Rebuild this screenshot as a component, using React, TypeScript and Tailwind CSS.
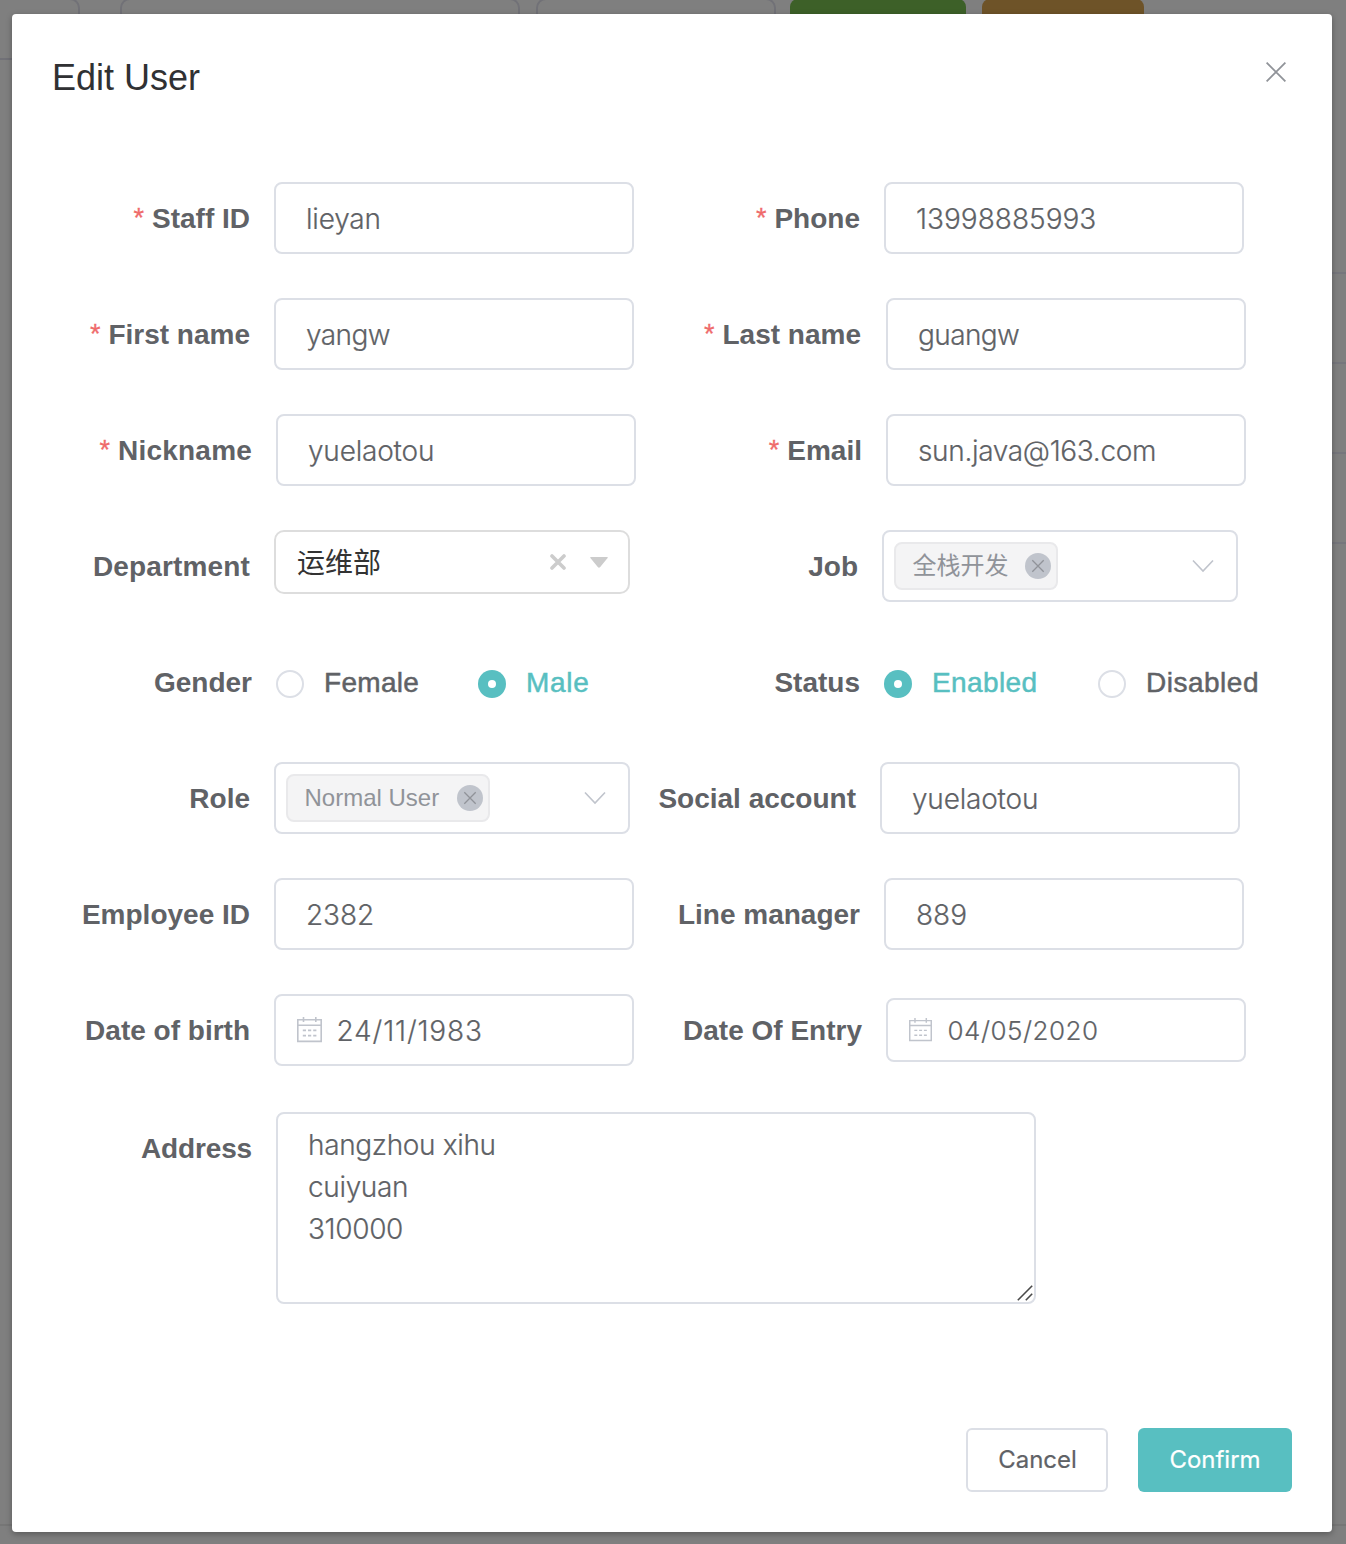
import React from "react";

const inputText =
  "font-['Inter','Noto_Sans_CJK_SC',sans-serif] font-light text-[28px] text-[#606266] [-webkit-text-stroke:0.2px_#606266] outline-none";

function Backdrop() {
  return (
    <div className="flex h-full flex-col bg-[#7f7f7f]">
      <div className="-mt-0.5 flex h-[60px] shrink-0">
        <div className="w-20 shrink-0 rounded-tr-[10px] border-2 border-b-0 border-l-0 border-[#717177]" />
        <div className="ml-10 w-[400px] shrink-0 rounded-[10px] border-2 border-[#717177]" />
        <div className="ml-4 w-60 shrink-0 rounded-[10px] border-2 border-[#717177]" />
        <div className="mt-px ml-3.5 w-44 shrink-0 rounded-[8px] bg-[#3d6028]" />
        <div className="mt-px ml-4 w-[162px] shrink-0 rounded-[8px] bg-[#6e5328]" />
      </div>
      <div className="h-0.5 w-3 shrink-0 bg-[#717177]" />
      <div className="ml-auto flex w-3.5 shrink-0 flex-col gap-[88px] pt-[212px]">
        <div className="h-0.5 bg-[#76767c]" />
        <div className="h-0.5 bg-[#76767c]" />
        <div className="h-0.5 bg-[#76767c]" />
        <div className="h-0.5 bg-[#76767c]" />
      </div>
      <div className="mt-[980px] h-0.5 shrink-0 bg-[#767676]" />
    </div>
  );
}

function Label({ text, width, required, tracking = "tracking-normal" }: { text: string; width: string; required?: boolean; tracking?: string }) {
  return (
    <div className={`${width} mr-6 flex shrink-0 justify-end pt-0.5 whitespace-nowrap text-[28px] font-bold text-[#606266] ${tracking}`}>
      {required && (
        <span className="mr-2 text-[27px] font-normal text-[#ef6b6b] [-webkit-text-stroke:0.3px_#ef6b6b]">*</span>
      )}
      {text}
    </div>
  );
}

function TextInput({ value, tracking = "tracking-normal" }: { value: string; tracking?: string }) {
  return (
    <input
      className={`h-[72px] w-[360px] rounded-lg border-2 border-[#dcdfe6] bg-white px-[30px] pt-0.5 ${inputText} ${tracking}`}
      defaultValue={value}
    />
  );
}

function CalendarIcon({ className }: { className: string }) {
  return (
    <svg className={className} viewBox="0 0 25 26" fill="none" stroke="#c0c4cc" strokeWidth="1.6">
      <path d="M0.8 2.8H24.2V24.4H0.8ZM0.8 8.2H24.2M6.5 0V5M18.8 0V5" />
      <path d="M5.8 13.4H9M11 13.4H14.2M16.2 13.4H19.4M5.8 18.6H9M11 18.6H14.2M16.2 18.6H19.4" />
    </svg>
  );
}

function DateInput({ value, small }: { value: string; small?: boolean }) {
  return (
    <div
      className={`flex w-[360px] items-center rounded-lg border-2 border-[#dcdfe6] bg-white pl-[21px] ${small ? "h-16" : "h-[72px]"}`}
    >
      <CalendarIcon className={small ? "h-6 w-[23px] shrink-0" : "h-[26px] w-[25px] shrink-0"} />
      <input
        className={`w-60 bg-transparent ${inputText} ${small ? "ml-[15.5px] !text-[26px] tracking-[0.5px]" : "ml-[14.5px] pt-0.5 tracking-[0.85px]"}`}
        defaultValue={value}
      />
    </div>
  );
}

function TagSelect({ tag, tagWidth }: { tag: string; tagWidth: string }) {
  return (
    <div className="flex h-[72px] w-[356px] items-center rounded-lg border-2 border-[#dcdfe6] bg-white pr-[22px] pl-2.5">
      <div
        className={`${tagWidth} flex h-12 items-center justify-between rounded-lg border-2 border-[#e9e9eb] bg-[#f4f4f5] pr-[5px] pl-[16.5px] text-[24px] whitespace-nowrap text-[#909399]`}
      >
        {tag}
        <svg className="h-[26px] w-[26px]" viewBox="0 0 26 26" fill="none">
          <circle cx="13" cy="13" r="13" fill="#c0c4cc" />
          <path d="M7.3 7.3L18.7 18.7M18.7 7.3L7.3 18.7" stroke="#909399" strokeWidth="1.3" />
        </svg>
      </div>
      <svg className="ml-auto h-3.5 w-[22px]" viewBox="0 0 22 14" fill="none" stroke="#c0c4cc" strokeWidth="1.6">
        <path d="M1 1.5L11 12L21 1.5" />
      </svg>
    </div>
  );
}

function TreeSelect() {
  return (
    <div className="mb-2 flex h-16 w-[356px] items-center rounded-[10px] border-2 border-[#ddd] bg-white pr-5 pl-[21px] text-[28px] text-[#333]">
      <span className="pt-[3px]">运维部</span>
      <svg className="ml-auto h-4 w-4" viewBox="0 0 16 16" stroke="#ccc" strokeWidth="3.6" strokeLinecap="round">
        <path d="M2 2L14 14M14 2L2 14" />
      </svg>
      <svg className="ml-6 h-[11px] w-[18px]" viewBox="0 0 18 11" fill="#ccc">
        <path d="M1 0H17Q18.6 0 17.4 1.3L10.2 10Q9 11.4 7.8 10L0.6 1.3Q-0.6 0 1 0Z" />
      </svg>
    </div>
  );
}

function Radio({ text, checked, className, tracking }: { text: string; checked?: boolean; className: string; tracking: string }) {
  return (
    <label className={`${className} flex items-center`}>
      {checked ? (
        <span className="mt-1 flex h-7 w-7 items-center justify-center rounded-full bg-[#58bfc1]">
          <span className="h-2 w-2 rounded-full bg-white" />
        </span>
      ) : (
        <span className="mt-1 h-7 w-7 rounded-full border-2 border-[#dcdfe6] bg-white" />
      )}
      <span
        className={`ml-5 pt-0.5 text-[28px] ${tracking} ${checked ? "text-[#58bfc1] [-webkit-text-stroke:0.5px_#58bfc1]" : "text-[#606266] [-webkit-text-stroke:0.5px_#606266]"}`}
      >
        {text}
      </span>
    </label>
  );
}

function Row({ left, right }: { left: React.ReactNode; right: React.ReactNode }) {
  return (
    <div className="flex h-[72px]">
      <div className="flex w-[624px] shrink-0 items-center">{left}</div>
      <div className="flex items-center">{right}</div>
    </div>
  );
}

export default function App() {
  return (
    <div className="relative h-[1544px] w-[1346px] overflow-hidden font-['Liberation_Sans','Noto_Sans_CJK_SC',sans-serif]">
      <Backdrop />
      <div className="absolute top-[14px] left-3 flex h-[1518px] w-[1320px] flex-col rounded bg-white shadow-[0_2px_6px_rgba(0,0,0,0.3)]">
        <header className="flex h-[168px] shrink-0 items-start justify-between pt-11 pr-[46px] pl-10">
          <h1 className="text-[36px] leading-10 text-[#303133]">Edit User</h1>
          <svg className="mt-1 h-5 w-5" viewBox="0 0 20 20" stroke="#909399" strokeWidth="1.8">
            <path d="M0.6 0.6L19.4 19.4M19.4 0.6L0.6 19.4" />
          </svg>
        </header>

        <div className="flex flex-col gap-11">
          <Row
            left={<><Label text="Staff ID" width="w-[238px]" required /><TextInput value="lieyan" tracking="tracking-[-0.2px]" /></>}
            right={<><Label text="Phone" width="w-56" required /><TextInput value="13998885993" /></>}
          />
          <Row
            left={<><Label text="First name" width="w-[238px]" required /><TextInput value="yangw" tracking="tracking-[-0.6px]" /></>}
            right={<><Label text="Last name" width="w-[225px]" required /><div className="w-px" /><TextInput value="guangw" tracking="tracking-[-0.6px]" /></>}
          />
          <Row
            left={<><Label text="Nickname" width="w-60" tracking="tracking-[0.2px]" required /><TextInput value="yuelaotou" tracking="tracking-[-0.2px]" /></>}
            right={<><Label text="Email" width="w-[226px]" required /><TextInput value="sun.java@163.com" tracking="tracking-[-0.34px]" /></>}
          />
          <Row
            left={<><Label text="Department" width="w-[238px]" tracking="tracking-[0.15px]" /><TreeSelect /></>}
            right={<><Label text="Job" width="w-[222px]" /><TagSelect tag="全栈开发" tagWidth="w-[164px]" /></>}
          />
          <Row
            left={
              <>
                <Label text="Gender" width="w-60" />
                <Radio text="Female" className="w-[202px]" tracking="tracking-[0.3px]" />
                <Radio text="Male" className="" tracking="tracking-[0.7px]" checked />
              </>
            }
            right={
              <>
                <Label text="Status" width="w-56" />
                <Radio text="Enabled" className="w-[214px]" tracking="tracking-[0.4px]" checked />
                <Radio text="Disabled" className="" tracking="tracking-[0.5px]" />
              </>
            }
          />
          <Row
            left={<><Label text="Role" width="w-[238px]" /><TagSelect tag="Normal User" tagWidth="w-[204px]" /></>}
            right={<><Label text="Social account" width="w-[220px]" /><TextInput value="yuelaotou" tracking="tracking-[-0.2px]" /></>}
          />
          <Row
            left={<><Label text="Employee ID" width="w-[238px]" /><TextInput value="2382" tracking="tracking-[-0.1px]" /></>}
            right={<><Label text="Line manager" width="w-56" /><TextInput value="889" /></>}
          />
          <Row
            left={<><Label text="Date of birth" width="w-[238px]" /><DateInput value="24/11/1983" /></>}
            right={<><Label text="Date Of Entry" width="w-[226px]" /><DateInput value="04/05/2020" small /></>}
          />
        </div>

        <div className="mt-[46px] flex items-start">
          <div className="flex h-[72px] items-center">
            <Label text="Address" width="w-60" tracking="tracking-[-0.15px]" />
          </div>
          <div className="relative h-48 w-[760px]">
            <textarea
              className={`block h-48 w-[760px] resize-none rounded-lg border-2 border-[#dcdfe6] px-[30px] py-2.5 leading-[42px] tracking-[-0.35px] ${inputText}`}
              defaultValue={"hangzhou xihu\ncuiyuan\n310000"}
            />
            <svg className="absolute right-[3px] bottom-[3px] h-4 w-4" viewBox="0 0 16 16" stroke="#4a4a4a" strokeWidth="1.6">
              <path d="M0.8 15.2L15.2 0.8M8.8 15.2L15.2 8.8" />
            </svg>
          </div>
        </div>

        <footer className="mt-auto mb-10 flex justify-end gap-[30px] pr-10 font-['Inter',sans-serif] text-[24px]">
          <button className="h-16 w-[142px] rounded-md border-2 border-[#dcdfe6] pl-px text-[#606266] [-webkit-text-stroke:0.2px_#606266]">
            Cancel
          </button>
          <button className="h-16 w-[154px] rounded-md bg-[#58bfc1] text-white [-webkit-text-stroke:0.2px_white]">
            Confirm
          </button>
        </footer>
      </div>
    </div>
  );
}
